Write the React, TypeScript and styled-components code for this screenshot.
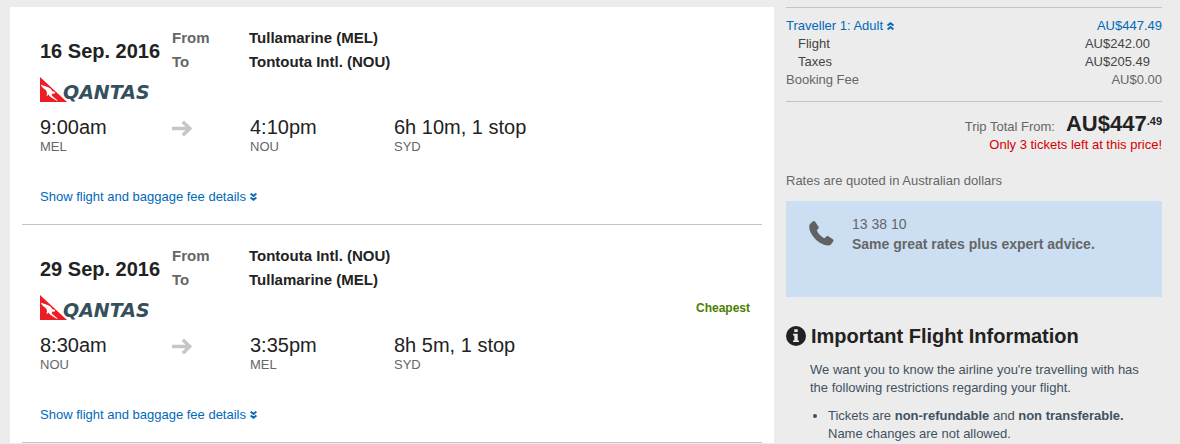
import React from "react";
import styled, { createGlobalStyle } from "styled-components";

const GlobalStyle = createGlobalStyle`
  *, *::before, *::after { box-sizing: border-box; }
  body {
    margin: 0;
    background: #ececec;
    color: #666;
    font: 13px/18px "Liberation Sans", Arial, sans-serif;
  }
  p, h1, h2, h3, dl, dd, ul { margin: 0; padding: 0; }
`;

const Page = styled.div`
  display: grid;
  grid-template-columns: minmax(0, 1fr) 376px;
  gap: 12px;
  padding: 7px 18px 0 10px;
`;

const Itinerary = styled.main`
  padding: 0 12px;
  background: #fff;
`;

const Segment = styled.section`
  padding: 19px 12px 18px 18px;
  border-bottom: 1px solid #c3c3c3;
`;

const SegmentHeader = styled.div`
  display: grid;
  grid-template-columns: 132px minmax(0, 1fr);
  align-items: center;
`;

const FlightDate = styled.h2`
  padding-top: 2px;
  font-size: 20px;
  line-height: 24px;
  color: #222;
`;

const Route = styled.dl`
  display: grid;
  grid-template-columns: 77px 1fr;
  font-size: 15px;
  line-height: 24px;
  font-weight: bold;
  dd { color: #222; }
`;

const AirlineRow = styled.div`
  display: flex;
  align-items: center;
  justify-content: space-between;
  margin-top: 3px;
  svg { display: block; }
`;

const Badge = styled.span`
  font-size: 12px;
  font-weight: bold;
  color: #4a8000;
`;

const Times = styled.div`
  display: grid;
  grid-template-columns: 132px 78px 144px 1fr;
  margin-top: 14px;
`;

const Time = styled.p`
  font-size: 20px;
  line-height: 22px;
  color: #222;
`;

const Arrow = styled.svg`
  display: block;
  margin-top: 4px;
`;

const BlueLink = styled.a`
  color: #0069b9;
  text-decoration: none;
  svg { margin-left: 4px; }
`;

const Details = styled.p`
  margin-top: 32px;
`;

const PriceBox = styled.div`
  padding: 9px 0 12px;
  border-top: 1px solid #c3c3c3;
  border-bottom: 1px solid #c3c3c3;
`;

const PriceTable = styled.table`
  width: 100%;
  border-collapse: collapse;
  th, td { padding: 0; font-weight: normal; text-align: left; }
  td { text-align: right; }
`;

const PriceRow = styled.tr<{ $nested?: boolean }>`
  color: ${(p) => (p.$nested ? "#444" : "inherit")};
  && th { padding-left: ${(p) => (p.$nested ? 12 : 0)}px; }
  && td { padding-right: ${(p) => (p.$nested ? 12 : 0)}px; }
`;

const Total = styled.p`
  display: flex;
  justify-content: flex-end;
  align-items: baseline;
  padding-top: 13px;
`;

const Amount = styled.strong`
  margin-left: 11px;
  font-size: 22px;
  color: #222;
`;

const Cents = styled.strong`
  align-self: flex-start;
  font-size: 11px;
  line-height: 12px;
  color: #222;
`;

const Urgency = styled.p`
  text-align: right;
  color: #d60000;
`;

const Note = styled.p`
  margin: 18px 0 11px;
`;

const CallBox = styled.div`
  display: flex;
  gap: 18px;
  min-height: 96px;
  padding: 13px 23px;
  background: #ccdef2;
  font-size: 14px;
  line-height: 20px;
  svg { margin-top: 7px; }
`;

const NoticeTitle = styled.h2`
  display: flex;
  align-items: center;
  gap: 5px;
  margin-top: 27px;
  font-size: 20px;
  line-height: 24px;
  color: #222;
`;

const Notice = styled.div`
  margin-top: 13px;
  padding: 0 18px 0 24px;
  color: #41525f;
  ul { margin-top: 10px; padding-left: 18px; }
`;

function Chevrons({ up = false }: { up?: boolean }) {
  return (
    <svg width="7" height="8" viewBox="0 0 7 8" fill="none" stroke="currentColor" strokeWidth="1.9" aria-hidden="true">
      {up ? <path d="M.6 3.6 3.5 1.2 6.4 3.6M.6 7.4 3.5 5 6.4 7.4" /> : <path d="M.6.6 3.5 3 6.4.6M.6 4.4 3.5 6.8 6.4 4.4" />}
    </svg>
  );
}

function QantasLogo() {
  return (
    <svg width="118" height="25" viewBox="0 0 118 25" role="img" aria-label="Qantas">
      <path d="M0 0 27 25H0Z" fill="#ee1c25" />
      <path
        d="M.8 7.6C3 9 5 9 7.4 10 10 11 11.6 12.4 12.4 14.3L15.2 15 14.8 16.4 12.2 16.8C11.4 17.8 11.6 18.4 12.6 19.2L17.6 23.4 17 24 10.6 20C9.4 19.1 9 18.4 8.8 17.6L6.6 19.2 7 15.8C7 14 5.6 12.8 3.6 11.4 2.2 10.4 1.4 9.2.8 7.6Z"
        fill="#fff"
      />
      <text x="23" y="22" fill="#35505c" fontFamily="DejaVu Sans, sans-serif" fontSize="19" fontWeight="bold" fontStyle="italic">
        QANTAS
      </text>
    </svg>
  );
}

type Flight = {
  date: string;
  from: string;
  to: string;
  depart: string;
  departCode: string;
  arrive: string;
  arriveCode: string;
  duration: string;
  stop: string;
  cheapest?: boolean;
};

const flights: Flight[] = [
  {
    date: "16 Sep. 2016", from: "Tullamarine (MEL)", to: "Tontouta Intl. (NOU)",
    depart: "9:00am", departCode: "MEL", arrive: "4:10pm", arriveCode: "NOU",
    duration: "6h 10m, 1 stop", stop: "SYD",
  },
  {
    date: "29 Sep. 2016", from: "Tontouta Intl. (NOU)", to: "Tullamarine (MEL)",
    depart: "8:30am", departCode: "NOU", arrive: "3:35pm", arriveCode: "MEL",
    duration: "8h 5m, 1 stop", stop: "SYD", cheapest: true,
  },
];

function FlightSegment({ flight }: { flight: Flight }) {
  return (
    <Segment>
      <SegmentHeader>
        <FlightDate>{flight.date}</FlightDate>
        <Route>
          <dt>From</dt>
          <dd>{flight.from}</dd>
          <dt>To</dt>
          <dd>{flight.to}</dd>
        </Route>
      </SegmentHeader>
      <AirlineRow>
        <QantasLogo />
        {flight.cheapest && <Badge>Cheapest</Badge>}
      </AirlineRow>
      <Times>
        <div>
          <Time>{flight.depart}</Time>
          <p>{flight.departCode}</p>
        </div>
        <Arrow width="21" height="17" viewBox="0 0 21 17" fill="none" stroke="#c6c6c6" strokeWidth="3.4" aria-hidden="true">
          <path d="M0 8.5H18M10.8 1.7 17.8 8.5 10.8 15.3" />
        </Arrow>
        <div>
          <Time>{flight.arrive}</Time>
          <p>{flight.arriveCode}</p>
        </div>
        <div>
          <Time>{flight.duration}</Time>
          <p>{flight.stop}</p>
        </div>
      </Times>
      <Details>
        <BlueLink href="#details">
          Show flight and baggage fee details
          <Chevrons />
        </BlueLink>
      </Details>
    </Segment>
  );
}

export default function App() {
  return (
    <>
      <GlobalStyle />
      <Page>
        <Itinerary>
          {flights.map((f) => (
            <FlightSegment key={f.date} flight={f} />
          ))}
        </Itinerary>
        <aside>
          <PriceBox>
            <PriceTable>
              <tbody>
                <PriceRow>
                  <th scope="row">
                    <BlueLink href="#traveller">
                      Traveller 1: Adult
                      <Chevrons up />
                    </BlueLink>
                  </th>
                  <td>
                    <BlueLink href="#price">AU$447.49</BlueLink>
                  </td>
                </PriceRow>
                <PriceRow $nested>
                  <th scope="row">Flight</th>
                  <td>AU$242.00</td>
                </PriceRow>
                <PriceRow $nested>
                  <th scope="row">Taxes</th>
                  <td>AU$205.49</td>
                </PriceRow>
                <PriceRow>
                  <th scope="row">Booking Fee</th>
                  <td>AU$0.00</td>
                </PriceRow>
              </tbody>
            </PriceTable>
          </PriceBox>
          <Total>
            Trip Total From:
            <Amount>AU$447</Amount>
            <Cents>.49</Cents>
          </Total>
          <Urgency>Only 3 tickets left at this price!</Urgency>
          <Note>Rates are quoted in Australian dollars</Note>
          <CallBox>
            <svg width="25" height="25" viewBox="0 0 25 25" fill="#626262" aria-hidden="true">
              <path d="M4.3.1 1 3Q0 4 .3 7C1 14 10 24 19 24.5Q21 24.6 22 23.4L24.3 20.2Q24.9 19 23.8 18.3L19 15.1Q18 14.6 17.2 15.4L15.6 17.2C12.5 16 9 12.5 7.8 9.2L9.4 7.4Q10 6.6 9.4 5.6L6 .6Q5.2-.3 4.3.1Z" />
            </svg>
            <div>
              <p>13 38 10</p>
              <p>
                <strong>Same great rates plus expert advice.</strong>
              </p>
            </div>
          </CallBox>
          <NoticeTitle>
            <svg width="20" height="20" viewBox="0 0 20 20" aria-hidden="true">
              <circle cx="10" cy="10" r="10" fill="#222" />
              <path d="M8.3 3.2h3.4v2.9H8.3ZM7 7.8h4.7v6.6H13v1.7H7v-1.7h1.3V9.5H7Z" fill="#ececec" />
            </svg>
            Important Flight Information
          </NoticeTitle>
          <Notice>
            <p>We want you to know the airline you're travelling with has the following restrictions regarding your flight.</p>
            <ul>
              <li>
                Tickets are <strong>non-refundable</strong> and <strong>non transferable.</strong>
                <br />
                Name changes are not allowed.
              </li>
            </ul>
          </Notice>
        </aside>
      </Page>
    </>
  );
}
